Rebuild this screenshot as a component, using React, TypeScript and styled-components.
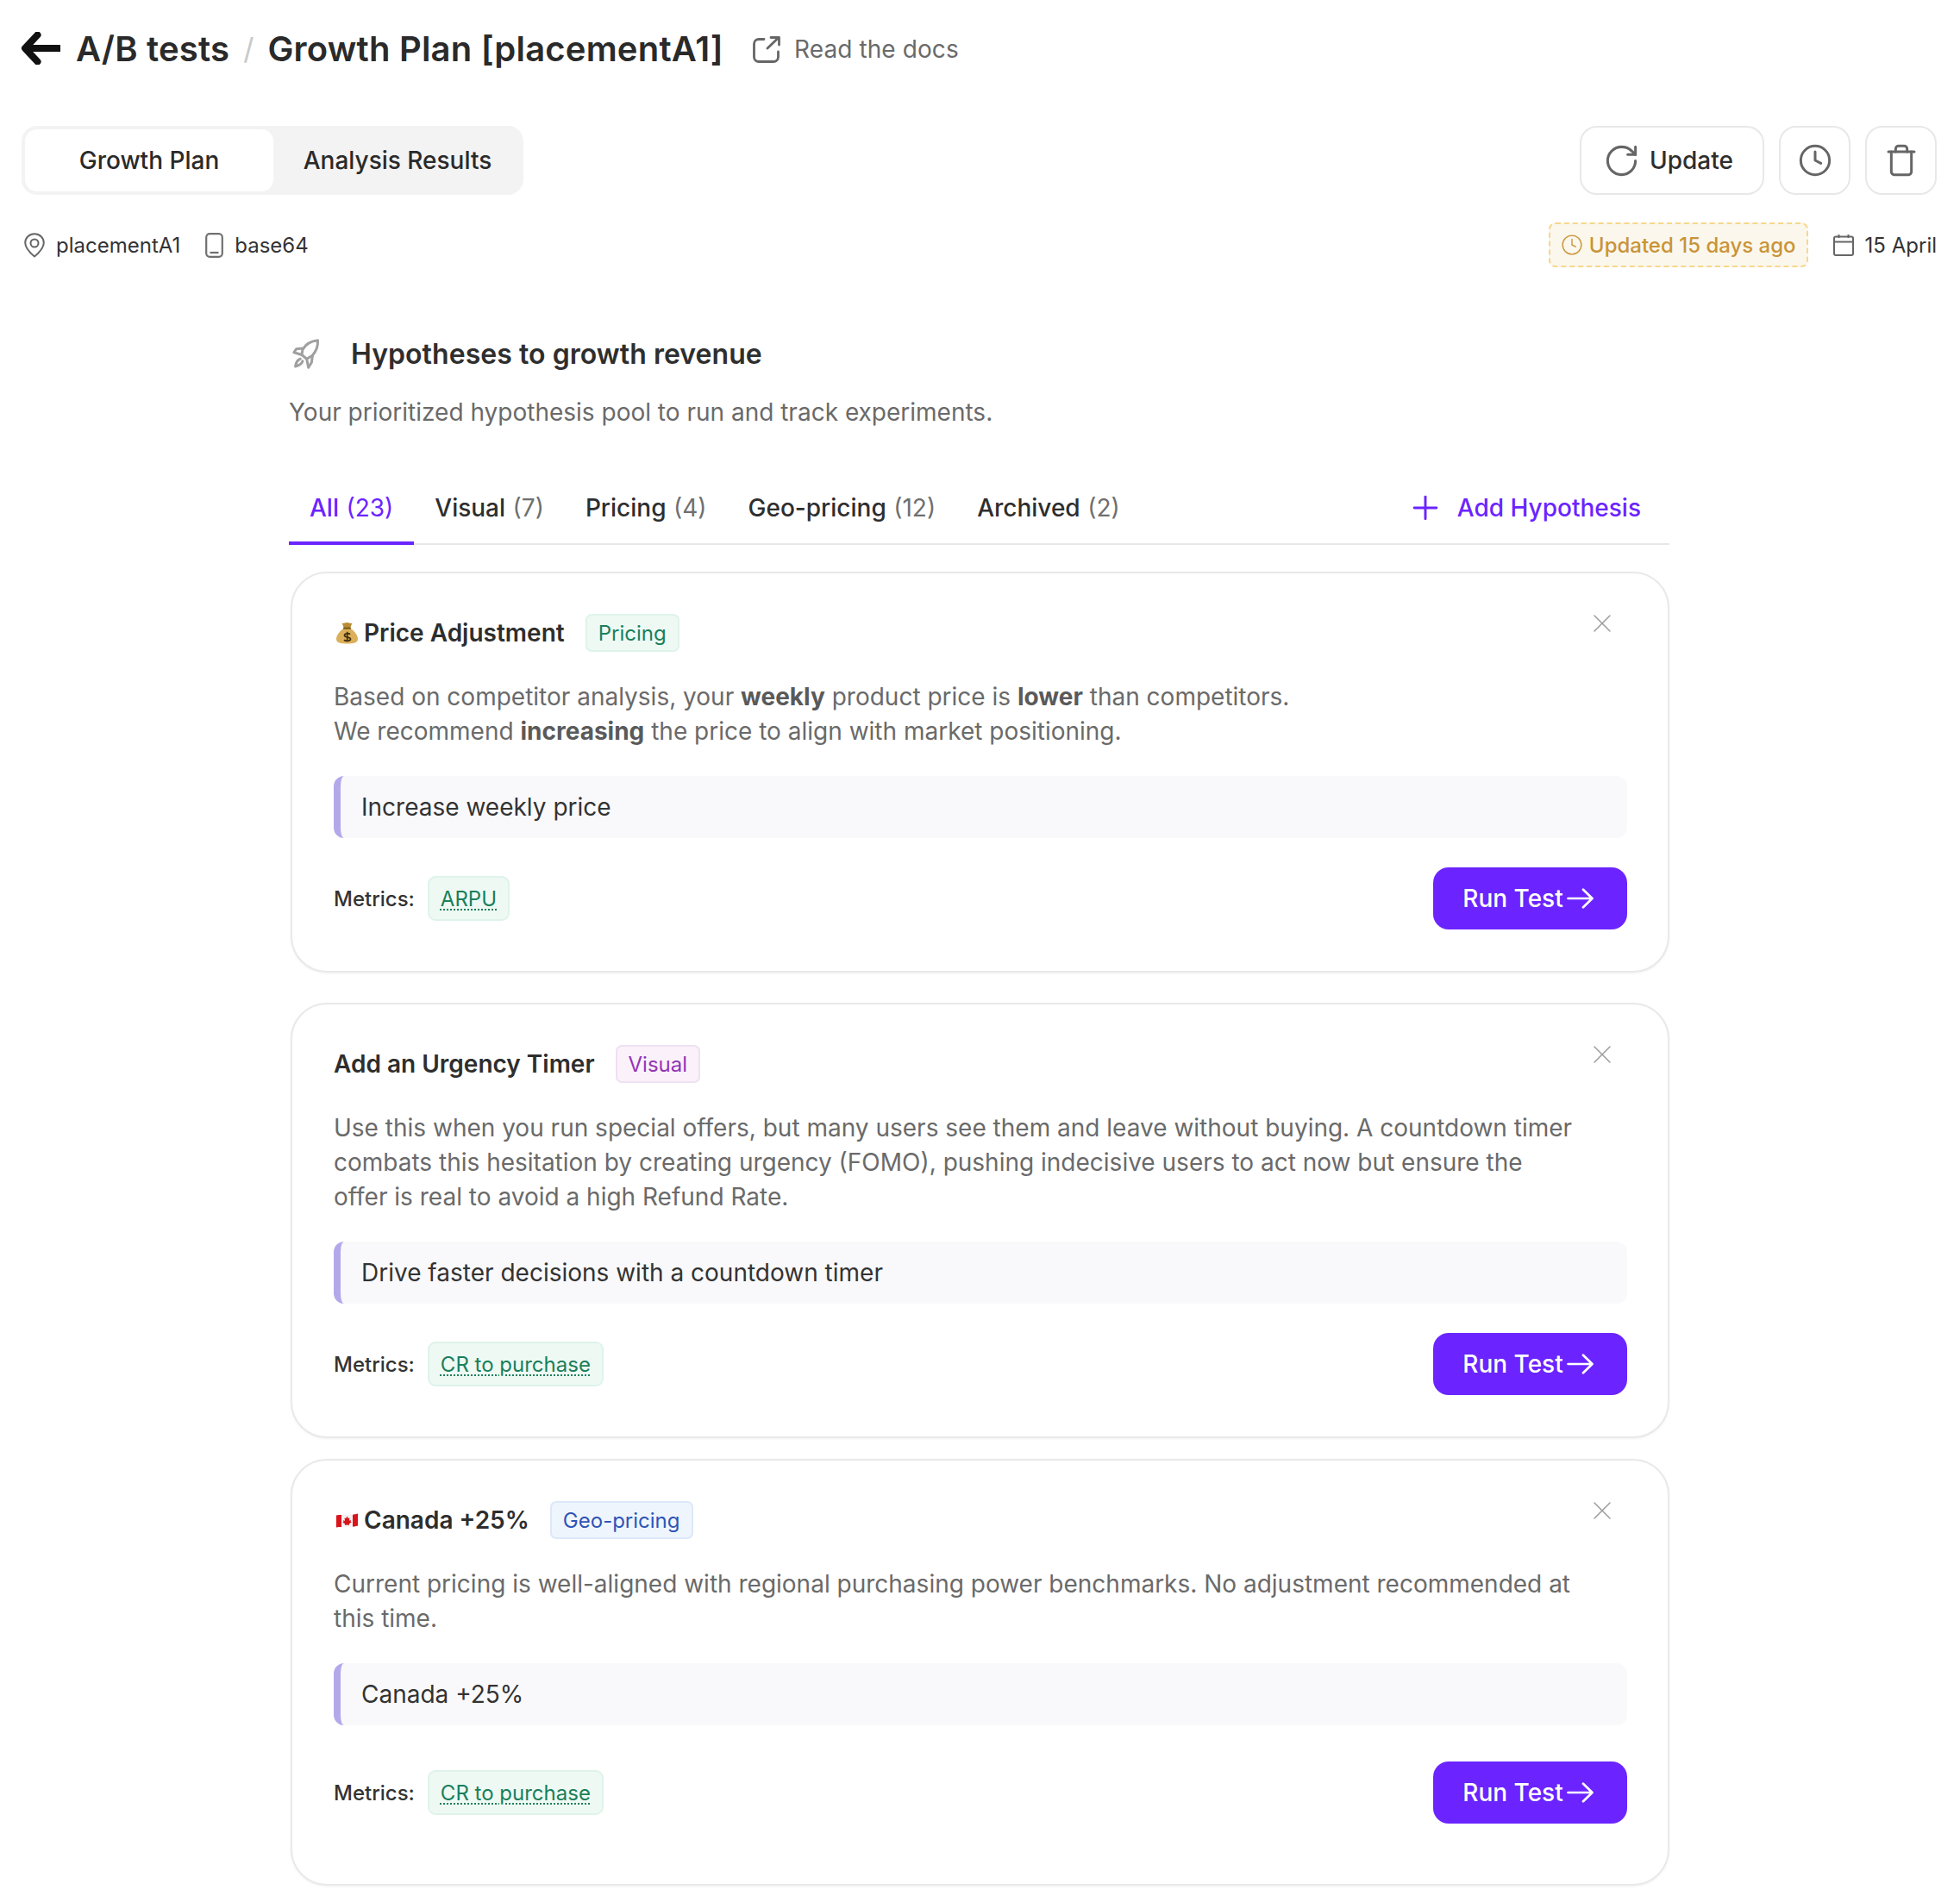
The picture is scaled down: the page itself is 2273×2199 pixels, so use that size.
import { createGlobalStyle, styled } from "styled-components";
import { Clock, Plus, RotateCw, Trash, X } from "lucide-react";

const GlobalStyle = createGlobalStyle`
  html, body {
    margin: 0;
    padding: 0;
    background: #fff;
    font-family: Inter, "Liberation Sans", sans-serif;
    color: #2e2e2e;
  }
  * { box-sizing: border-box; }
`;

interface HypothesisData {
  icon?: "bag" | "flag";
  title: string;
  tag: "Pricing" | "Visual" | "Geo-pricing";
  body: React.ReactNode;
  action: string;
  metric: string;
  gap?: number;
  metricsGap?: number;
  extraBottom?: number;
}

const hypotheses: HypothesisData[] = [
  {
    icon: "bag",
    title: "Price Adjustment",
    tag: "Pricing",
    body: (
      <>
        Based on competitor analysis, your <b>weekly</b> product price is{" "}
        <b>lower</b> than competitors.
        <br />
        We recommend <b>increasing</b> the price to align with market
        positioning.
      </>
    ),
    action: "Increase weekly price",
    metric: "ARPU",
  },
  {
    title: "Add an Urgency Timer",
    tag: "Visual",
    body: "Use this when you run special offers, but many users see them and leave without buying. A countdown timer combats this hesitation by creating urgency (FOMO), pushing indecisive users to act now but ensure the offer is real to avoid a high Refund Rate.",
    action: "Drive faster decisions with a countdown timer",
    metric: "CR to purchase",
    gap: 35,
  },
  {
    icon: "flag",
    title: "Canada +25%",
    tag: "Geo-pricing",
    body: "Current pricing is well-aligned with regional purchasing power benchmarks. No adjustment recommended at this time.",
    action: "Canada +25%",
    metric: "CR to purchase",
    gap: 24,
    metricsGap: 8,
    extraBottom: 22,
  },
];

const tabs = [
  { label: "All", count: 23 },
  { label: "Visual", count: 7 },
  { label: "Pricing", count: 4 },
  { label: "Geo-pricing", count: 12 },
  { label: "Archived", count: 2 },
];

function BackArrow() {
  return (
    <svg width="46" height="38" viewBox="0 0 46 38" fill="none" stroke="#111" strokeWidth="8">
      <path d="M46 19H7" />
      <path d="M19.500 3.500L5 19l14.500 15.500" strokeLinecap="round" strokeLinejoin="round" />
    </svg>
  );
}

function DocsIcon() {
  return (
    <svg width="32" height="31" viewBox="0 0 32 31" fill="none" stroke="#666" strokeWidth="2.8" strokeLinecap="round" strokeLinejoin="round">
      <path d="M13 3.500H7A5.500 5.500 0 0 0 1.500 9v15A5.500 5.500 0 0 0 7 29.500h17a5.500 5.500 0 0 0 5.500-5.500v-6" />
      <path d="M17 14L30 1.500M21 1.500h9.500V10" />
    </svg>
  );
}

function PinIcon() {
  return (
    <svg width="24" height="29" viewBox="0 0 24 29" fill="none" stroke="#666" strokeWidth="2">
      <path d="M12 1.200c6 0 10.800 4.500 10.800 10.300 0 6.500-6 12-10.800 16-4.800-4-10.800-9.500-10.800-16C1.200 5.700 6 1.200 12 1.200z" strokeLinejoin="round" />
      <circle cx="12" cy="12" r="4.500" />
    </svg>
  );
}

function DeviceIcon() {
  return (
    <svg width="21" height="29" viewBox="0 0 21 29" fill="none" stroke="#707070" strokeWidth="2.200">
      <rect x="1.200" y="1.200" width="18.600" height="26.600" rx="4" />
      <path d="M5.500 23h10" />
    </svg>
  );
}

function CalendarIcon() {
  return (
    <svg width="24" height="26" viewBox="0 0 24 26" fill="none" stroke="#666" strokeWidth="2">
      <rect x="1" y="3.500" width="22" height="21.500" rx="2" />
      <path d="M1 9.500h22M6.500 1v4M17.500 1v4" />
    </svg>
  );
}

function RocketIcon() {
  return (
    <svg width="34" height="37" viewBox="20 20 100 110" fill="none" stroke="#a0a0a0" strokeWidth="9" strokeLinejoin="round" strokeLinecap="round">
      <path d="M110 28C88 30 68 42 58 60l-3 18 17 14 20-12c13-15 20-32 18-52z" />
      <path d="M58 56l-22 2-8 12 27 8" />
      <path d="M92 80l-3 24-11 18-6-30" />
      <path d="M50 92c-10 3-15 13-17 26 12-3 22-8 25-18" />
    </svg>
  );
}

function RunArrow() {
  return (
    <svg width="31" height="24" viewBox="0 0 31 24" fill="none" stroke="#fff" strokeWidth="2.700" strokeLinecap="round" strokeLinejoin="round">
      <path d="M1.500 12H29M19 1.800L29.500 12 19 22.200" />
    </svg>
  );
}

function MoneyBag() {
  return (
    <svg width="25" height="26" viewBox="0 0 25 26">
      <path d="M6.500 1.500c2 1.200 3.500-.6 6-.5 2.500 0 4 1.700 6 .5l-2.500 6H9z" fill="#b98d35" />
      <path d="M9 7.500h7c5 3 9 8.500 9 12.500 0 4.800-5 5.500-12.500 5.500S0 24.800 0 20c0-4 4-9.500 9-12.500z" fill="#dcb05a" />
      <rect x="8" y="6.500" width="9" height="2.200" rx="1" fill="#7d5c1e" />
      <path d="M16 14.700c-1-1.400-6.500-1.500-6.500 1.200 0 3 7 1.500 7 4.400 0 2.600-6 2.500-7.500 .8M12.700 11.800v11.500" stroke="#3d2c0c" strokeWidth="1.700" fill="none" />
    </svg>
  );
}

function FlagCanada() {
  return (
    <svg width="25" height="17" viewBox="0 0 25 17">
      <path d="M0 2.500c8-1.500 17 0 25-2v14c-8 2-17 .5-25 2z" fill="#f6f1f1" />
      <path d="M0 2.500c2-.4 4-.5 6-.5v14c-2 0-4 .1-6 .5zM19 1.800c2-.2 4-.7 6-1.300v14c-2 .6-4 1.100-6 1.300z" fill="#d8141c" />
      <path d="M12.500 3.500l1.300 2.500 1.700-.6-.6 3.400 2-1-.4 1.800 1.300.7-3 2.300.3 1.300-2.600-.3-2.600 .4.300-1.400-3-2.200 1.300-.7-.4-1.800 2 1-.6-3.400 1.700 .6z" fill="#d8141c" />
    </svg>
  );
}

function HypothesisCard({ item }: { item: HypothesisData }) {
  return (
    <Card $gap={item.gap} $extraBottom={item.extraBottom}>
      <CardHead>
        <CardTitle>
          {item.icon === "bag" ? (
            <TitleIcon>
              <MoneyBag />
            </TitleIcon>
          ) : null}
          {item.icon === "flag" ? (
            <TitleIcon>
              <FlagCanada />
            </TitleIcon>
          ) : null}
          {item.title}
        </CardTitle>
        <Tag $kind={item.tag}>{item.tag}</Tag>
        <CloseButton>
          <X size={36} strokeWidth={1} color="#9b9b9b" />
        </CloseButton>
      </CardHead>
      <Description>{item.body}</Description>
      <ActionQuote>{item.action}</ActionQuote>
      <CardFooter $extra={item.metricsGap}>
        <Metrics>
          Metrics:
          <MetricTag>
            <span>{item.metric}</span>
          </MetricTag>
        </Metrics>
        <RunButton>
          Run Test
          <RunArrow />
        </RunButton>
      </CardFooter>
    </Card>
  );
}

function App() {
  return (
    <Page>
      <GlobalStyle />
      <TitleRow>
        <BackArrow />
        <Crumb>A/B tests</Crumb>
        <Slash>/</Slash>
        <Crumb>Growth Plan [placementA1]</Crumb>
        <DocsLink>
          <DocsIcon />
          Read the docs
        </DocsLink>
      </TitleRow>

      <ToolRow>
        <Segments>
          <Segment $active>Growth Plan</Segment>
          <Segment>Analysis Results</Segment>
        </Segments>
        <ToolButtons>
          <UpdateButton>
            <RotateCw size={43} strokeWidth={1.7} color="#666" />
            Update
          </UpdateButton>
          <IconButton>
            <Clock size={40} strokeWidth={1.8} color="#666" />
          </IconButton>
          <IconButton>
            <Trash size={40} strokeWidth={1.8} color="#666" />
          </IconButton>
        </ToolButtons>
      </ToolRow>

      <MetaRow>
        <MetaGroup>
          <MetaItem>
            <PinIcon />
            placementA1
          </MetaItem>
          <MetaItem>
            <DeviceIcon />
            base64
          </MetaItem>
        </MetaGroup>
        <MetaGroup>
          <UpdatedBadge>
            <Clock size={26} strokeWidth={1.3} />
            Updated 15 days ago
          </UpdatedBadge>
          <MetaItem>
            <CalendarIcon />
            15 April
          </MetaItem>
        </MetaGroup>
      </MetaRow>

      <Section>
        <SectionHead>
          <RocketIcon />
          <SectionTitle>Hypotheses to growth revenue</SectionTitle>
        </SectionHead>
        <SectionText>
          Your prioritized hypothesis pool to run and track experiments.
        </SectionText>

        <TabBar>
          {tabs.map((tab, index) => (
            <Tab key={tab.label} $active={index === 0}>
              {tab.label} <TabCount $active={index === 0}>({tab.count})</TabCount>
            </Tab>
          ))}
          <AddLink>
            <Plus size={44} strokeWidth={1.6} />
            Add Hypothesis
          </AddLink>
        </TabBar>

        <CardList>
          {hypotheses.map((item) => (
            <HypothesisCard key={item.title} item={item} />
          ))}
        </CardList>
      </Section>
    </Page>
  );
}

export default App;

const Page = styled.div`
  width: 2273px;
  height: 2199px;
  padding: 0 27px 0 24px;
  overflow: hidden;
`;

const TitleRow = styled.div`
  height: 112px;
  display: flex;
  align-items: center;

  & > svg {
    margin-right: 18px;
  }
`;

const Crumb = styled.span`
  font-size: 40px;
  font-weight: 600;
  color: #2a2a2a;
  letter-spacing: 0.2px;
  white-space: nowrap;
`;

const Slash = styled.span`
  font-size: 34px;
  color: #c9c9c9;
  margin: 0 16px;
`;

const DocsLink = styled.span`
  display: flex;
  align-items: center;
  gap: 16px;
  margin-left: 34px;
  padding-top: 2px;
  font-size: 28px;
  font-weight: 400;
  letter-spacing: 0.1px;
  color: #6a6a6a;
`;

const ToolRow = styled.div`
  margin-top: 34px;
  display: flex;
  justify-content: space-between;
  align-items: center;
`;

const Segments = styled.div`
  display: flex;
  padding: 4px 2px 4px 4px;
  width: 582px;
  height: 80px;
  margin-left: 1px;
  border-radius: 18px;
  background: #f3f3f3;
`;

const Segment = styled.div<{ $active?: boolean }>`
  width: 288px;
  display: flex;
  align-items: center;
  justify-content: center;
  border-radius: 14px;
  font-size: 28px;
  font-weight: 500;
  color: #2a2a2a;
  background: ${(p) => (p.$active ? "#fff" : "transparent")};
`;

const ToolButtons = styled.div`
  display: flex;
  gap: 17px;
`;

const UpdateButton = styled.div`
  width: 214px;
  height: 80px;
  padding-left: 25px;
  display: flex;
  align-items: center;
  gap: 11px;
  border: 2px solid #e8e8e8;
  border-radius: 20px;
  font-size: 28px;
  font-weight: 500;
`;

const IconButton = styled.div`
  width: 83px;
  height: 80px;
  display: flex;
  align-items: center;
  justify-content: center;
  border: 2px solid #e8e8e8;
  border-radius: 20px;
`;

const MetaRow = styled.div`
  margin-top: 32px;
  height: 52px;
  display: flex;
  justify-content: space-between;
  align-items: center;
  padding-left: 4px;
`;

const MetaGroup = styled.div`
  display: flex;
  align-items: center;
  gap: 29px;
`;

const MetaItem = styled.span`
  display: flex;
  align-items: center;
  gap: 13px;
  font-size: 24px;
  color: #333;
  white-space: nowrap;
`;

const UpdatedBadge = styled.span`
  height: 52px;
  padding: 0 12px;
  display: flex;
  align-items: center;
  gap: 7px;
  background: #fbf7ec;
  border: 2px dashed #f6d78b;
  border-radius: 8px;
  font-size: 24px;
  font-weight: 500;
  color: #c99438;
  white-space: nowrap;
`;

const Section = styled.div`
  margin: 0 0 0 311px;
  width: 1601px;
`;

const SectionHead = styled.div`
  margin-top: 78px;
  height: 44px;
  display: flex;
  align-items: center;
  gap: 35px;
  padding-left: 3px;
`;

const SectionTitle = styled.h2`
  margin: 0;
  font-size: 32px;
  font-weight: 600;
  letter-spacing: 0.05px;
  color: #2e2e2e;
`;

const SectionText = styled.p`
  margin: 26px 0 0;
  font-size: 28px;
  line-height: 40px;
  color: #6a6a6a;
`;

const TabBar = styled.div`
  margin-top: 58px;
  height: 76px;
  display: flex;
  align-items: stretch;
  border-bottom: 2px solid #e8e8e8;
`;

const Tab = styled.div<{ $active?: boolean }>`
  padding: 0 24px 10px;
  display: flex;
  align-items: center;
  gap: 8.5px;
  font-size: 28px;
  font-weight: 500;
  white-space: nowrap;
  color: ${(p) => (p.$active ? "#6b24ff" : "#2e2e2e")};
  box-shadow: ${(p) => (p.$active ? "inset 0 -4px 0 #6b24ff" : "none")};
  margin-bottom: -2px;
`;

const TabCount = styled.span<{ $active?: boolean }>`
  font-weight: 400;
  color: ${(p) => (p.$active ? "#6b24ff" : "#6f6f6f")};
`;

const AddLink = styled.div`
  margin-left: auto;
  margin-right: 33px;
  padding-bottom: 8px;
  display: flex;
  align-items: center;
  gap: 15px;
  font-size: 28px;
  font-weight: 500;
  color: #6b24ff;
`;

const CardList = styled.div`
  margin-top: 31px;
  margin-left: 2px;
`;

const Card = styled.article<{ $gap?: number; $extraBottom?: number }>`
  margin-top: ${(p) => p.$gap ?? 0}px;
  padding: 47px 47px ${(p) => 48 + (p.$extraBottom ?? 0)}px 48px;
  border: 2px solid #e9e9e9;
  border-radius: 42px;
  background: #fff;
  box-shadow: 0 1px 3px rgba(0, 0, 0, 0.06);
`;

const CardHead = styled.div`
  position: relative;
  height: 44px;
  display: flex;
  align-items: center;
  gap: 24px;
`;

const CardTitle = styled.h3`
  margin: 0;
  display: flex;
  align-items: center;
  gap: 7px;
  font-size: 28px;
  font-weight: 600;
  color: #2e2e2e;
`;

const TitleIcon = styled.span`
  display: flex;
  margin-left: 3px;
`;

const tagColors = {
  Pricing: { bg: "#eef9f4", border: "#dff3ea", color: "#1a7f5a" },
  Visual: { bg: "#faf1fb", border: "#f0e0f3", color: "#9334b5" },
  "Geo-pricing": { bg: "#eff5fd", border: "#dce8f9", color: "#2f55b5" },
};

const Tag = styled.span<{ $kind: keyof typeof tagColors }>`
  height: 44px;
  padding: 0 13px;
  display: flex;
  align-items: center;
  border-radius: 7px;
  font-size: 24px;
  background: ${(p) => tagColors[p.$kind].bg};
  border: 2px solid ${(p) => tagColors[p.$kind].border};
  color: ${(p) => tagColors[p.$kind].color};
`;

const CloseButton = styled.span`
  position: absolute;
  top: -7px;
  right: 11px;
  display: flex;
`;

const Description = styled.p`
  margin: 32px 0 0;
  padding-right: 58px;
  font-size: 28px;
  line-height: 40px;
  color: #6a6a6a;

  b {
    font-weight: 700;
    color: #5a5a5a;
  }
`;

const ActionQuote = styled.div`
  margin-top: 32px;
  height: 72px;
  padding-left: 24px;
  display: flex;
  align-items: center;
  border-left: 8px solid #b3a9ea;
  border-radius: 12px;
  background: #f9f9fb;
  font-size: 28px;
  color: #333;
`;

const CardFooter = styled.div<{ $extra?: number }>`
  margin-top: ${(p) => 34 + (p.$extra ?? 0)}px;
  display: flex;
  justify-content: space-between;
  align-items: center;
`;

const Metrics = styled.div`
  display: flex;
  align-items: center;
  gap: 15px;
  font-size: 24px;
  font-weight: 500;
  color: #333;
`;

const MetricTag = styled.span`
  height: 52px;
  padding: 0 13px;
  display: flex;
  align-items: center;
  border-radius: 9px;
  background: #eef9f4;
  border: 2px solid #dff3ea;
  font-weight: 400;
  color: #1a7f5a;

  span {
    text-decoration: underline dotted #1a7f5a 2px;
    text-underline-offset: 4px;
  }
`;

const RunButton = styled.button`
  width: 225px;
  height: 72px;
  padding: 0 5px 0 0;
  display: flex;
  align-items: center;
  justify-content: center;
  gap: 4px;
  border: 0;
  border-radius: 18px;
  background: #6b24ff;
  color: #fff;
  font-family: inherit;
  font-size: 28px;
  font-weight: 500;
`;
